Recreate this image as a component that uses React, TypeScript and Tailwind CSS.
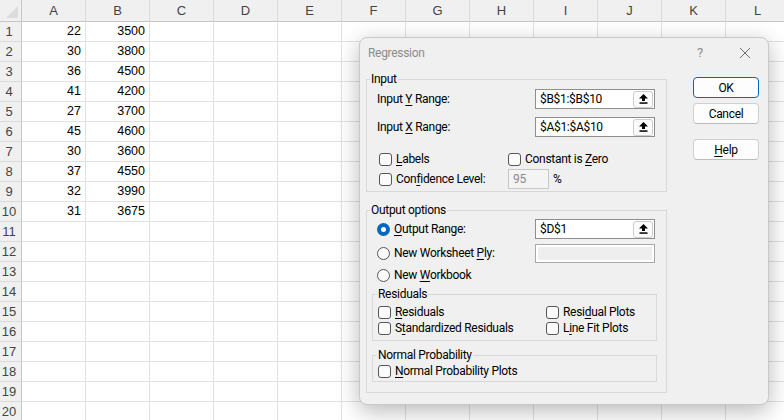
import React from "react";

const colA = [22, 30, 36, 41, 27, 45, 30, 37, 32, 31];
const colB = [3500, 3800, 4500, 4200, 3700, 4600, 3600, 4550, 3990, 3675];
const letters = ["A", "B", "C", "D", "E", "F", "G", "H", "I", "J", "K", "L"];

const U: React.FC<{ children: React.ReactNode }> = ({ children }) => (
  <span className="underline underline-offset-[2px]">{children}</span>
);

const Check: React.FC = () => (
  <span className="inline-block w-[13px] h-[13px] shrink-0 rounded-[3px] border border-[#555] bg-[#fbfbfb]" />
);

const Radio: React.FC<{ on?: boolean }> = ({ on }) =>
  on ? (
    <span className="flex w-[13px] h-[13px] shrink-0 items-center justify-center rounded-full bg-[#0067c0]">
      <span className="w-[5px] h-[5px] rounded-full bg-white" />
    </span>
  ) : (
    <span className="inline-block w-[13px] h-[13px] shrink-0 rounded-full border border-[#555] bg-[#fbfbfb]" />
  );

const CollapseIcon: React.FC = () => (
  <svg width="9" height="10" viewBox="0 0 9 10">
    <polygon points="4.5,0 9,4.5 6,4.5 6,7 3,7 3,4.5 0,4.5" fill="#000" />
    <rect x="0.5" y="8.3" width="8" height="1.5" fill="#000" />
  </svg>
);

const RefBox: React.FC<{ value: string }> = ({ value }) => (
  <div className="flex w-[120px] h-[20px] items-center border border-[#8e8e8e] bg-white pl-[4px] pr-[1px]">
    <span className="flex-1">{value}</span>
    <span className="flex w-[20px] h-[17px] items-center justify-center rounded-[3px] border border-[#cccccc] bg-[#fbfbfb]">
      <CollapseIcon />
    </span>
  </div>
);

const Sheet: React.FC = () => (
  <div className="grid grid-cols-[22px_repeat(12,64px)] grid-rows-[22px_repeat(20,20px)] font-['Liberation_Sans',Arial,sans-serif] text-[12.5px]">
    <div className="relative border-r border-b border-[#c6c6c6] bg-[#f0f0f0]">
      <svg width="12" height="12" viewBox="0 0 12 12" className="absolute right-[3px] bottom-[3px]">
        <polygon points="12,0 12,12 0,12" fill="#dcdcdc" />
      </svg>
    </div>
    {letters.map((l) => (
      <div
        key={l}
        className="flex items-center justify-center border-r border-r-[#dadada] border-b border-b-[#c6c6c6] bg-[#f0f0f0] text-[13px] text-[#444]"
      >
        {l}
      </div>
    ))}
    {Array.from({ length: 20 }).map((_, r) => (
      <React.Fragment key={r}>
        <div className="flex items-center justify-center pr-[3px] border-r border-r-[#c6c6c6] border-b border-b-[#dadada] bg-[#f0f0f0] text-[13px] text-[#444]">
          {r + 1}
        </div>
        {letters.map((l, c) => (
          <div
            key={l}
            className="flex items-center justify-end pr-[4px] border-r border-b border-[#e1e1e1] text-black"
          >
            {c === 0 && r < 10 ? colA[r] : c === 1 && r < 10 ? colB[r] : ""}
          </div>
        ))}
      </React.Fragment>
    ))}
  </div>
);

const Btn: React.FC<{ children: React.ReactNode; primary?: boolean; className?: string }> = ({
  children,
  primary,
  className,
}) => (
  <div
    className={`flex w-[66px] h-[21px] items-center justify-center rounded-[4px] bg-[#fdfdfd] ${
      primary ? "border border-[#0067c0]" : "border border-[#d0d0d0] border-b-[#bcbcbc]"
    } ${className ?? ""}`}
  >
    {children}
  </div>
);

const Dialog: React.FC = () => (
  <div className="absolute left-[359px] top-[37px] w-[410px] h-[368px] rounded-[8px] border border-[#c9c9c9] bg-[#f0f0f0] shadow-[0_6px_22px_rgba(0,0,0,0.28)] font-[Roboto,sans-serif] text-[12px] tracking-[-0.3px] text-black">
    {/* title bar */}
    <div className="flex h-[30px] items-center justify-between">
      <span className="pl-[8px] text-[#8c8c8c]">Regression</span>
      <div className="flex h-full">
        <span className="flex w-[44px] items-center justify-center text-[13px] text-[#8c8c8c]">?</span>
        <span className="flex w-[46px] items-center justify-center">
          <svg width="12" height="12" viewBox="0 0 12 12">
            <path d="M1 1L11 11M11 1L1 11" stroke="#6e6e6e" strokeWidth="1" />
          </svg>
        </span>
      </div>
    </div>

    <div className="flex pl-[6px]">
      <div className="w-[301px]">
        {/* Input */}
        <fieldset className="mt-[3px] min-w-0 border border-[#d9d9d9] px-[10px] pb-[2px]">
          <legend className="-ml-[7px] px-[1px] leading-[16px]">Input</legend>
          <div className="mt-[2px] flex h-[20px] items-center">
            <span className="w-[158px]">
              Input <U>Y</U> Range:
            </span>
            <RefBox value="$B$1:$B$10" />
          </div>
          <div className="mt-[8px] flex h-[20px] items-center">
            <span className="w-[158px]">
              Input <U>X</U> Range:
            </span>
            <RefBox value="$A$1:$A$10" />
          </div>
          <div className="mt-[14px] flex h-[16px] items-center">
            <span className="flex w-[131px] items-center gap-[4px] pl-[2px]">
              <Check />
              <span>
                <U>L</U>abels
              </span>
            </span>
            <span className="flex items-center gap-[4px]">
              <Check />
              <span>
                Constant is <U>Z</U>ero
              </span>
            </span>
          </div>
          <div className="mt-[2px] flex h-[20px] items-center">
            <span className="flex w-[131px] items-center gap-[4px] pl-[2px]">
              <Check />
              <span>
                Con<U>f</U>idence Level:
              </span>
            </span>
            <span className="flex w-[41px] h-[20px] items-center border border-[#c8c8c8] bg-[#f4f4f4] pl-[4px] text-[#8a8a8a]">
              95
            </span>
            <span className="ml-[4px]">%</span>
          </div>
        </fieldset>

        {/* Output options */}
        <fieldset className="mt-[10px] min-w-0 border border-[#d9d9d9] px-[10px] pb-[10px]">
          <legend className="-ml-[7px] px-[1px] leading-[16px]">Output options</legend>
          <div className="mt-[1px] flex h-[20px] items-center">
            <span className="flex w-[158px] items-center gap-[4px]">
              <Radio on />
              <span>
                <U>O</U>utput Range:
              </span>
            </span>
            <RefBox value="$D$1" />
          </div>
          <div className="mt-[4px] flex h-[20px] items-center">
            <span className="flex w-[158px] items-center gap-[4px]">
              <Radio />
              <span>
                New Worksheet <U>P</U>ly:
              </span>
            </span>
            <span className="w-[120px] h-[19px] border border-[#a8a8a8] bg-[#eeeeee] shadow-[inset_0_0_0_2px_#ffffff]" />
          </div>
          <div className="mt-[4px] flex h-[16px] items-center gap-[4px]">
            <Radio />
            <span>
              New <U>W</U>orkbook
            </span>
          </div>

          <fieldset className="-ml-[5px] mt-[3px] w-[285px] min-w-0 border border-[#d9d9d9] pl-[5px] pb-[4px]">
            <legend className="-ml-[1px] px-[1px] leading-[16px]">Residuals</legend>
            <div className="mt-[2px] flex h-[16px] items-center">
              <span className="flex w-[168px] items-center gap-[4px]">
                <Check />
                <span>
                  <U>R</U>esiduals
                </span>
              </span>
              <span className="flex items-center gap-[4px]">
                <Check />
                <span>
                  Resi<U>d</U>ual Plots
                </span>
              </span>
            </div>
            <div className="flex h-[16px] items-center">
              <span className="flex w-[168px] items-center gap-[4px]">
                <Check />
                <span>
                  S<U>t</U>andardized Residuals
                </span>
              </span>
              <span className="flex items-center gap-[4px]">
                <Check />
                <span>
                  L<U>i</U>ne Fit Plots
                </span>
              </span>
            </div>
          </fieldset>

          <fieldset className="-ml-[5px] mt-[6px] w-[285px] min-w-0 border border-[#d9d9d9] pl-[5px] pb-[2px]">
            <legend className="-ml-[1px] px-[1px] leading-[16px]">Normal Probability</legend>
            <div className="flex h-[16px] items-center gap-[4px]">
              <Check />
              <span>
                <U>N</U>ormal Probability Plots
              </span>
            </div>
          </fieldset>
        </fieldset>
      </div>

      {/* buttons */}
      <div className="ml-[26px] mt-[9px] flex flex-col">
        <Btn primary>OK</Btn>
        <Btn className="mt-[5px]">Cancel</Btn>
        <Btn className="mt-[15px]">
          <span>
            <U>H</U>elp
          </span>
        </Btn>
      </div>
    </div>
  </div>
);

export default function App() {
  return (
    <div className="relative w-[784px] h-[420px] overflow-hidden bg-white">
      <Sheet />
      <Dialog />
    </div>
  );
}
